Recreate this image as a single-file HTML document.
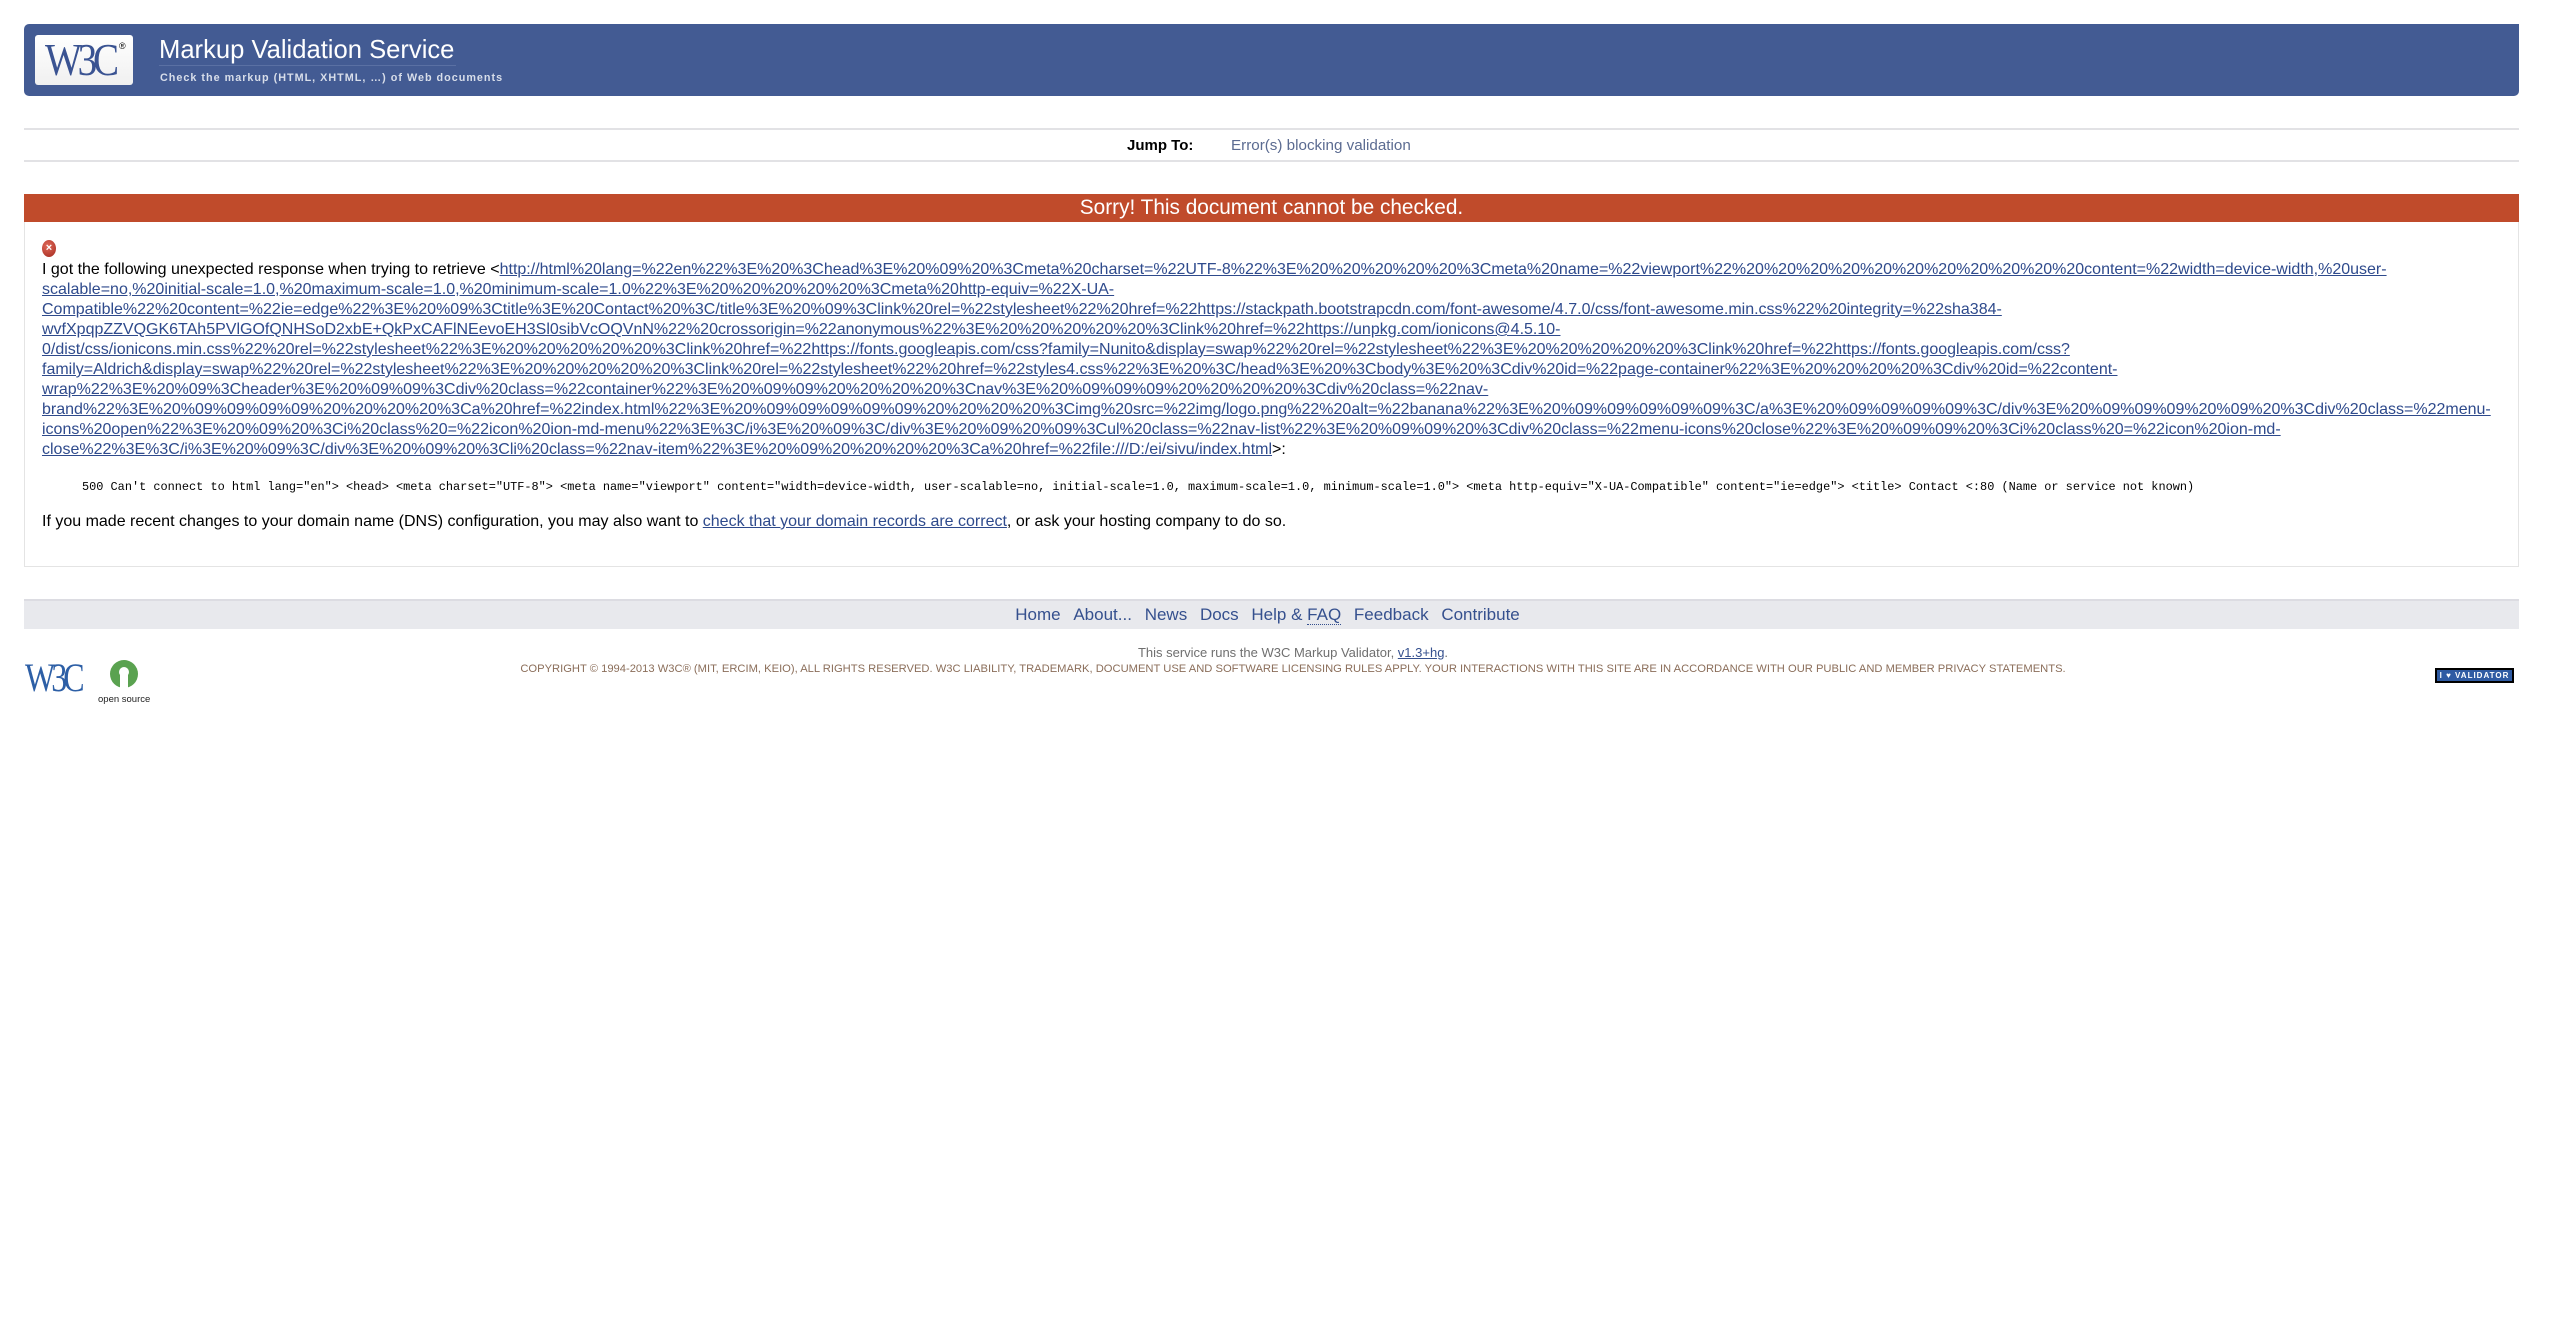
<!DOCTYPE html>
<html><head><meta charset="utf-8">
<style>
*{margin:0;padding:0;box-sizing:border-box}
body{width:2550px;height:1326px;background:#fff;font-family:"Liberation Sans",Arial,sans-serif;color:#000;position:relative;overflow:hidden}
a{color:#2e4a8c;text-decoration:underline}
#hdr{position:absolute;left:24px;top:24px;width:2495px;height:72px;background:#435b93;border-radius:5px 0 5px 5px}
#logo{position:absolute;left:11px;top:11px;width:98px;height:50px;background:linear-gradient(#fff,#f0f0f0);border-radius:3px}
#logo span{position:absolute;left:10px;top:3px;font-family:"Liberation Serif",serif;font-size:46px;color:#3a5392;letter-spacing:-5px;transform:scaleX(0.85);transform-origin:left;line-height:44px}
#logo sup{position:absolute;left:84px;top:6px;font-size:9px;color:#000}
#title{position:absolute;left:135px;top:11px;font-size:25.6px;color:#fff;line-height:30px;border-bottom:1px solid #5a70a3;padding-right:2px}
#sub{position:absolute;left:136px;top:48px;font-size:10.8px;color:#d8deea;font-weight:bold;letter-spacing:1px}
#jump{position:absolute;left:24px;top:128px;width:2495px;height:34px;border-top:2px solid #e2e2e5;border-bottom:2px solid #e2e2e5;font-size:15px}
#jump b{position:absolute;left:1103px;top:7px}
#jump span{position:absolute;left:1207px;top:7px;color:#5b6b91;font-size:15.2px}
#sorry{position:absolute;left:24px;top:194px;width:2495px;height:28px;background:#c04b2b;color:#fff;font-size:20.8px;text-align:center;line-height:28px}
#box{position:absolute;left:24px;top:222px;width:2495px;height:345px;border:1px solid #e4e4e4;border-top:none}
#err{position:absolute;left:17px;top:18px;width:14px;height:17px;border-radius:50%;background:radial-gradient(circle at 40% 35%,#e06a5a,#a3281d);color:#fff;font-size:11px;font-weight:bold;text-align:center;line-height:17px}
#txt{position:absolute;left:17px;top:38px;font-size:16px;line-height:20px;white-space:nowrap}
#pre{position:absolute;left:57px;top:258px;font-family:"Liberation Mono",monospace;font-size:11.9px;white-space:pre}
#last{position:absolute;left:17px;top:291px;font-size:16px;white-space:nowrap}
#nav{position:absolute;left:24px;top:599px;width:2495px;height:30px;background:#e8e9ed;border-top:2px solid #dcdce2;text-align:center;font-size:17px;line-height:28px;padding-right:8px}
#nav a{color:#35508e;text-decoration:none;margin:0 4px}
#nav abbr{border-bottom:1px dotted #35508e;text-decoration:none}
#svc{position:absolute;left:18px;top:645px;width:2550px;text-align:center;font-size:13px;color:#6f6f6f}
#svc a{color:#35508e}
#copy{position:absolute;left:18px;top:663px;width:2550px;text-align:center;font-size:11.2px;color:#8b6e5a;text-transform:uppercase}
#w3f{position:absolute;left:25px;top:658px;font-family:"Liberation Serif",serif;font-size:40px;color:#2d5fa6;letter-spacing:-5px;transform:scaleX(.8);transform-origin:left;line-height:40px}
#badge{position:absolute;left:2435px;top:668px;width:79px;height:15px;border:2px solid #000;background:#2f5ba3;color:#fff;font-size:8px;font-weight:bold;text-align:center;line-height:11px;letter-spacing:1px}
</style></head><body>
<div id="hdr">
 <div id="logo"><span>W3C</span><sup>®</sup></div>
 <div id="title">Markup Validation Service</div>
 <div id="sub">Check the markup (HTML, XHTML, …) of Web documents</div>
</div>
<div id="jump"><b>Jump To:</b><span>Error(s) blocking validation</span></div>
<div id="sorry">Sorry! This document cannot be checked.</div>
<div id="box">
 <div id="err">×</div>
 <div id="txt">I got the following unexpected response when trying to retrieve &lt;<a>http://html%20lang=%22en%22%3E%20%3Chead%3E%20%09%20%3Cmeta%20charset=%22UTF-8%22%3E%20%20%20%20%20%3Cmeta%20name=%22viewport%22%20%20%20%20%20%20%20%20%20%20%20content=%22width=device-width,%20user-<br>scalable=no,%20initial-scale=1.0,%20maximum-scale=1.0,%20minimum-scale=1.0%22%3E%20%20%20%20%20%3Cmeta%20http-equiv=%22X-UA-<br>Compatible%22%20content=%22ie=edge%22%3E%20%09%3Ctitle%3E%20Contact%20%3C/title%3E%20%09%3Clink%20rel=%22stylesheet%22%20href=%22https://stackpath.bootstrapcdn.com/font-awesome/4.7.0/css/font-awesome.min.css%22%20integrity=%22sha384-<br>wvfXpqpZZVQGK6TAh5PVlGOfQNHSoD2xbE+QkPxCAFlNEevoEH3Sl0sibVcOQVnN%22%20crossorigin=%22anonymous%22%3E%20%20%20%20%20%3Clink%20href=%22https://unpkg.com/ionicons@4.5.10-<br>0/dist/css/ionicons.min.css%22%20rel=%22stylesheet%22%3E%20%20%20%20%20%3Clink%20href=%22https://fonts.googleapis.com/css?family=Nunito&amp;display=swap%22%20rel=%22stylesheet%22%3E%20%20%20%20%20%3Clink%20href=%22https://fonts.googleapis.com/css?<br>family=Aldrich&amp;display=swap%22%20rel=%22stylesheet%22%3E%20%20%20%20%20%3Clink%20rel=%22stylesheet%22%20href=%22styles4.css%22%3E%20%3C/head%3E%20%3Cbody%3E%20%3Cdiv%20id=%22page-container%22%3E%20%20%20%20%3Cdiv%20id=%22content-<br>wrap%22%3E%20%09%3Cheader%3E%20%09%09%3Cdiv%20class=%22container%22%3E%20%09%09%20%20%20%20%3Cnav%3E%20%09%09%09%20%20%20%20%3Cdiv%20class=%22nav-<br>brand%22%3E%20%09%09%09%09%20%20%20%20%3Ca%20href=%22index.html%22%3E%20%09%09%09%09%09%20%20%20%20%3Cimg%20src=%22img/logo.png%22%20alt=%22banana%22%3E%20%09%09%09%09%09%3C/a%3E%20%09%09%09%09%3C/div%3E%20%09%09%09%20%09%20%3Cdiv%20class=%22menu-<br>icons%20open%22%3E%20%09%20%3Ci%20class%20=%22icon%20ion-md-menu%22%3E%3C/i%3E%20%09%3C/div%3E%20%09%20%09%3Cul%20class=%22nav-list%22%3E%20%09%09%20%3Cdiv%20class=%22menu-icons%20close%22%3E%20%09%09%20%3Ci%20class%20=%22icon%20ion-md-<br>close%22%3E%3C/i%3E%20%09%3C/div%3E%20%09%20%3Cli%20class=%22nav-item%22%3E%20%09%20%20%20%20%3Ca%20href=%22file:///D:/ei/sivu/index.html</a>&gt;:</div>
 <div id="pre">500 Can't connect to html lang="en"&gt; &lt;head&gt; &lt;meta charset="UTF-8"&gt; &lt;meta name="viewport" content="width=device-width, user-scalable=no, initial-scale=1.0, maximum-scale=1.0, minimum-scale=1.0"&gt; &lt;meta http-equiv="X-UA-Compatible" content="ie=edge"&gt; &lt;title&gt; Contact &lt;:80 (Name or service not known)</div>
 <div id="last">If you made recent changes to your domain name (DNS) configuration, you may also want to <a>check that your domain records are correct</a>, or ask your hosting company to do so.</div>
</div>
<div id="nav"><a>Home</a> <a>About...</a> <a>News</a> <a>Docs</a> <a>Help &amp; <abbr>FAQ</abbr></a> <a>Feedback</a> <a>Contribute</a></div>
<div id="svc">This service runs the W3C Markup Validator, <a>v1.3+hg</a>.</div>
<div id="copy">Copyright © 1994-2013 W3C® (MIT, ERCIM, Keio), All Rights Reserved. W3C liability, trademark, document use and software licensing rules apply. Your interactions with this site are in accordance with our public and member privacy statements.</div>
<div id="w3f">W3C</div>
<svg style="position:absolute;left:96px;top:658px" width="58" height="46" viewBox="0 0 58 46">
 <circle cx="28" cy="16" r="14" fill="#5aa250"/><circle cx="28" cy="14" r="5" fill="#fff"/><rect x="24" y="16" width="8" height="14" fill="#fff"/>
 <text x="2" y="44" font-size="9.5" font-family="Liberation Sans,sans-serif" fill="#222">open source</text>
</svg>
<div id="badge">I ♥ VALIDATOR</div>
</body></html>
